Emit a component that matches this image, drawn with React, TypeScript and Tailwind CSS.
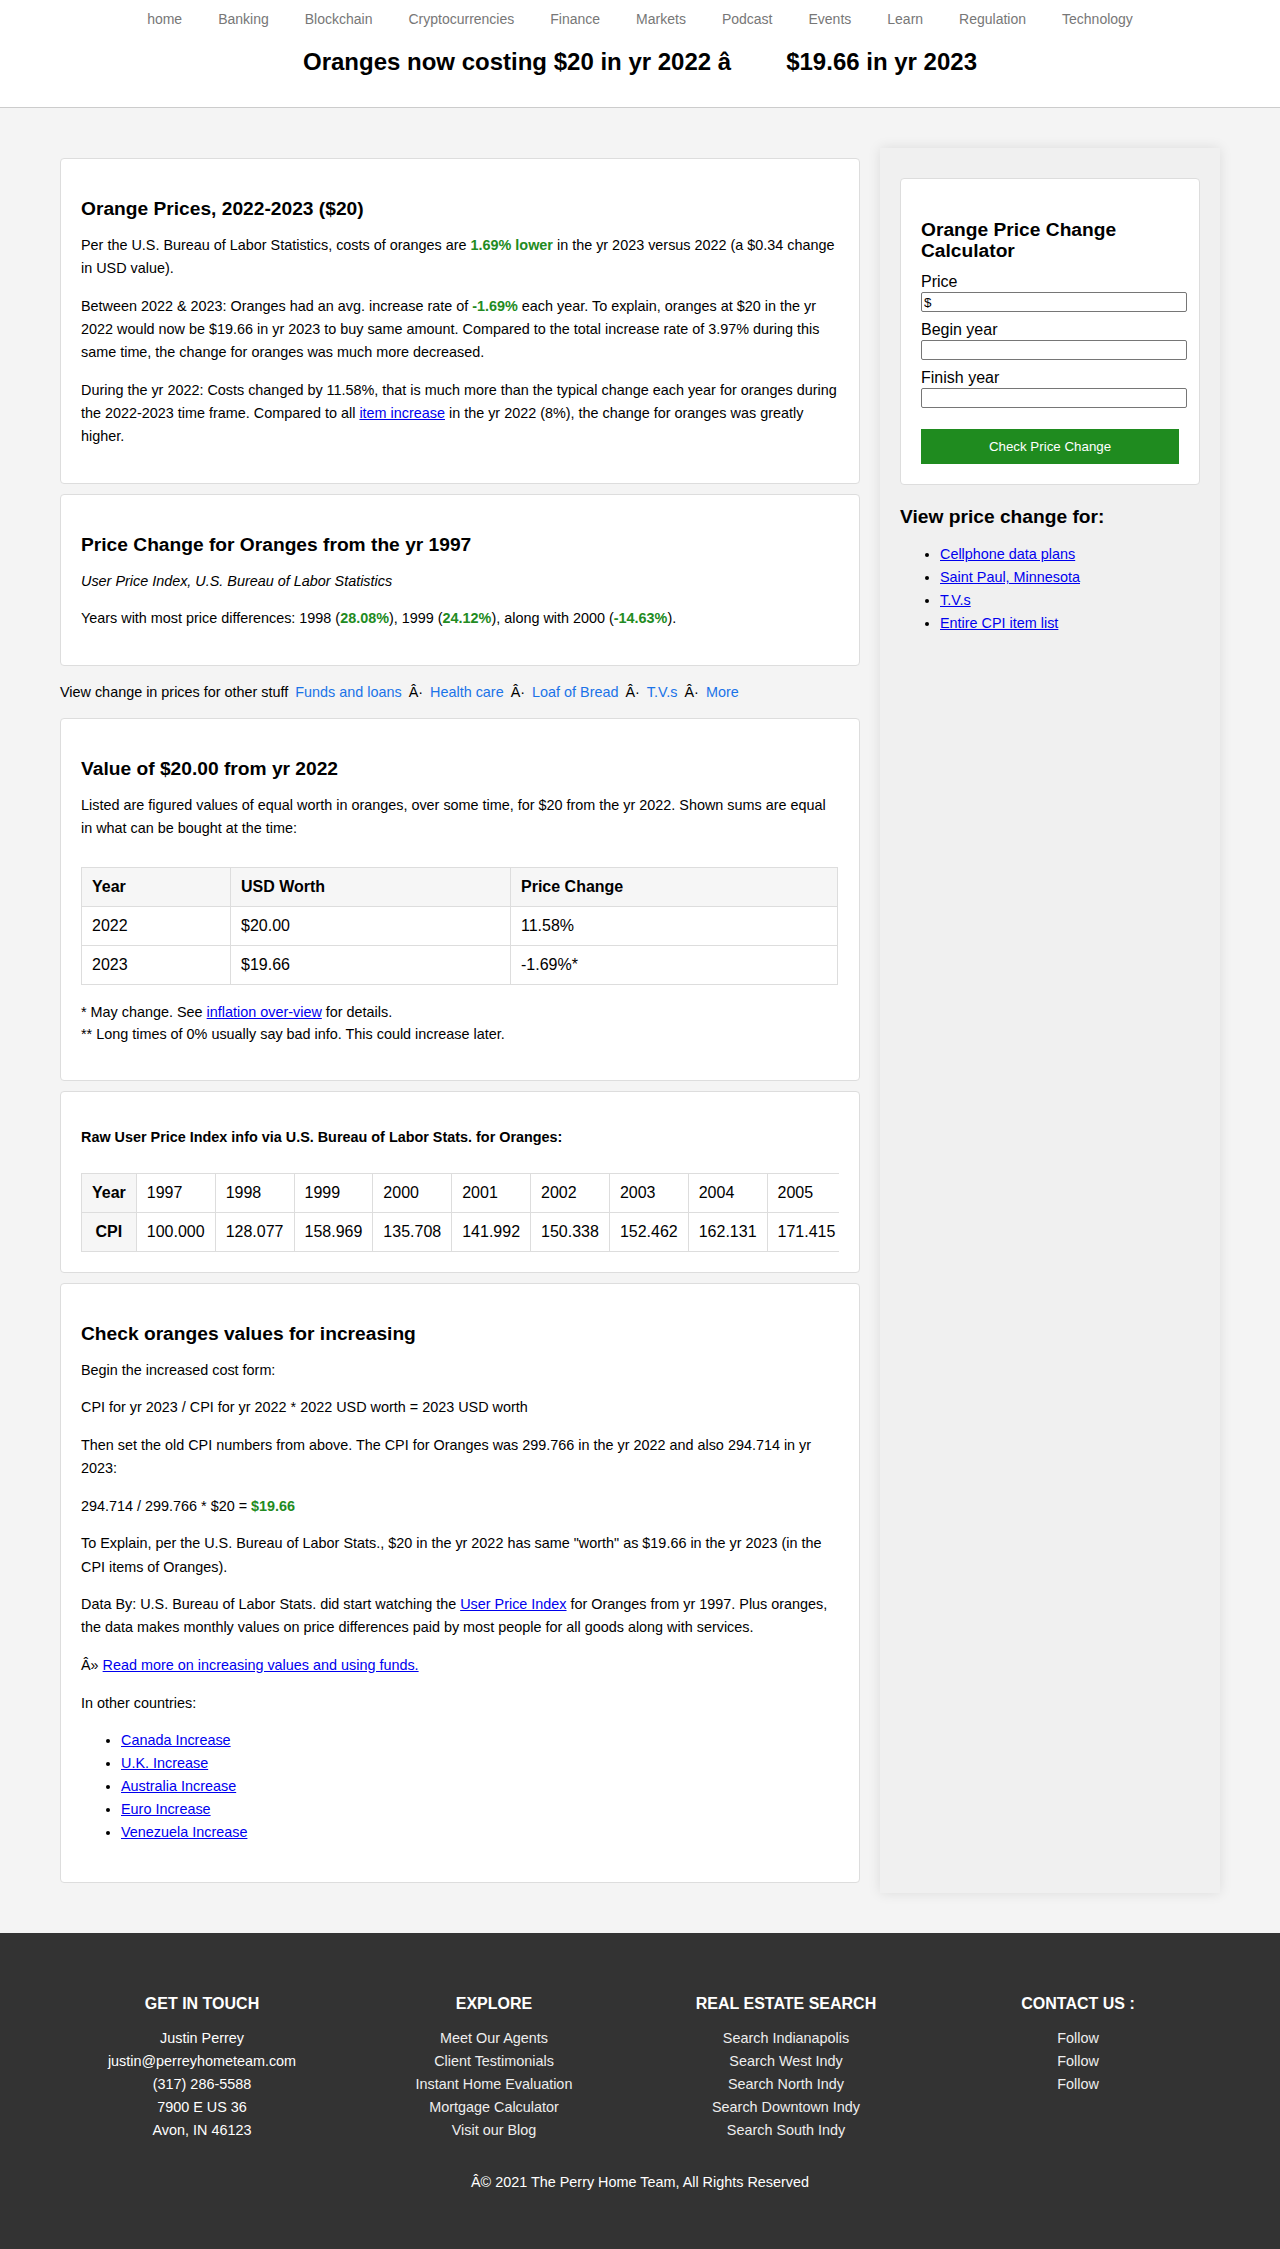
import React from 'react';

const nav = ['home', 'Banking', 'Blockchain', 'Cryptocurrencies', 'Finance', 'Markets', 'Podcast', 'Events', 'Learn', 'Regulation', 'Technology'];

const cpi: [string, string][] = [
  ['1997', '100.000'], ['1998', '128.077'], ['1999', '158.969'], ['2000', '135.708'], ['2001', '141.992'],
  ['2002', '150.338'], ['2003', '152.462'], ['2004', '162.131'], ['2005', '171.415'], ['2006', '180.220'],
  ['2007', '199.845'], ['2008', '213.553'], ['2009', '205.198'], ['2010', '209.017'], ['2011', '221.406'],
  ['2012', '229.914'], ['2013', '236.505'], ['2014', '241.080'], ['2015', '247.731'], ['2016', '244.308'],
  ['2017', '251.672'], ['2018', '259.203'], ['2019', '262.486'], ['2020', '270.334'], ['2021', '268.677'],
  ['2022', '299.766'], ['2023', '294.714'],
];

function Card({ children, className = '' }: { children: React.ReactNode; className?: string }) {
  return (
    <div className={`mb-[10px] rounded-[4px] border border-[#dddddd] bg-white px-[20px] pt-[20px] ${className}`}>
      {children}
    </div>
  );
}

function H2({ children }: { children: React.ReactNode }) {
  return <h2 className="mt-[19px] mb-[14px] text-[19.2px] font-bold leading-[22px]">{children}</h2>;
}

function P({ children, className = '' }: { children: React.ReactNode; className?: string }) {
  return <p className={`mb-[14.4px] leading-[23.2px] ${className}`}>{children}</p>;
}

const G = ({ children }: { children: React.ReactNode }) => <b className="text-[#228b22]">{children}</b>;
const A = ({ children }: { children: React.ReactNode }) => (
  <a href="#" className="text-[#0000ee] underline">
    {children}
  </a>
);

export default function App() {
  return (
    <div className="min-h-screen bg-[#f4f4f4] font-['Liberation_Sans',Arial,sans-serif] text-[14.4px] text-black">
      <header className="border-b border-[#cccccc] bg-white pt-[10px] pb-[31px] text-center">
        <nav className="flex justify-center gap-[36px] text-[14px] leading-[18px] text-[#777777]">
          {nav.map((n) => (
            <a key={n} href="#">
              {n}
            </a>
          ))}
        </nav>
        <h1 className="mt-[20px] text-[24px] font-bold leading-[28px]">
          Oranges now costing $20 in yr 2022 â<span className="inline-block w-[55px]" />$19.66 in yr 2023
        </h1>
      </header>

      <main className="pt-[40px] pb-[40px]">
        <div className="mx-auto flex w-[1160px] gap-[20px]">
          <div className="w-[800px] pt-[10px]">
            <Card className="pb-[20px]">
              <H2>Orange Prices, 2022-2023 ($20)</H2>
              <P>
                Per the U.S. Bureau of Labor Statistics, costs of oranges are <G>1.69% lower</G> in the yr 2023 versus 2022 (a $0.34
                change in USD value).
              </P>
              <P>
                Between 2022 &amp; 2023: Oranges had an avg. increase rate of <G>-1.69%</G> each year. To explain, oranges at $20 in
                the yr 2022 would now be $19.66 in yr 2023 to buy same amount. Compared to the total increase rate of 3.97% during this
                same time, the change for oranges was much more decreased.
              </P>
              <P>
                During the yr 2022: Costs changed by 11.58%, that is much more than the typical change each year for oranges during the
                2022-2023 time frame. Compared to all <A>item increase</A> in the yr 2022 (8%), the change for oranges was greatly
                higher.
              </P>
            </Card>

            <Card className="pb-[20px]">
              <H2>Price Change for Oranges from the yr 1997</H2>
              <P className="italic">User Price Index, U.S. Bureau of Labor Statistics</P>
              <P>
                Years with most price differences: 1998 (<G>28.08%</G>), 1999 (<G>24.12%</G>), along with 2000 (<G>-14.63%</G>).
              </P>
            </Card>

            <div className="pt-[4px] pb-[14px] leading-[24px]">
              View change in prices for other stuff <a href="#" className="mx-[3px] text-[#1a73e8]">Funds and loans</a> Â·{' '}
              <a href="#" className="mx-[3px] text-[#1a73e8]">Health care</a> Â·{' '}
              <a href="#" className="mx-[3px] text-[#1a73e8]">Loaf of Bread</a> Â·{' '}
              <a href="#" className="mx-[3px] text-[#1a73e8]">T.V.s</a> Â·{' '}
              <a href="#" className="mx-[3px] text-[#1a73e8]">More</a>
            </div>

            <Card className="pb-[20px]">
              <H2>Value of $20.00 from yr 2022</H2>
              <P>
                Listed are figured values of equal worth in oranges, over some time, for $20 from the yr 2022. Shown sums are equal in
                what can be bought at the time:
              </P>
              <table className="mt-[27px] w-[757px] border-collapse text-[16px] leading-[18px]">
                <thead>
                  <tr className="bg-[#f6f6f6]">
                    <th className="w-[149px] border border-[#dddddd] px-[10px] py-[10px] text-left font-bold">Year</th>
                    <th className="w-[280px] border border-[#dddddd] px-[10px] py-[10px] text-left font-bold">USD Worth</th>
                    <th className="border border-[#dddddd] px-[10px] py-[10px] text-left font-bold">Price Change</th>
                  </tr>
                </thead>
                <tbody>
                  <tr>
                    <td className="border border-[#dddddd] px-[10px] py-[10px]">2022</td>
                    <td className="border border-[#dddddd] px-[10px] py-[10px]">$20.00</td>
                    <td className="border border-[#dddddd] px-[10px] py-[10px]">11.58%</td>
                  </tr>
                  <tr>
                    <td className="border border-[#dddddd] px-[10px] py-[10px]">2023</td>
                    <td className="border border-[#dddddd] px-[10px] py-[10px]">$19.66</td>
                    <td className="border border-[#dddddd] px-[10px] py-[10px]">-1.69%*</td>
                  </tr>
                </tbody>
              </table>
              <p className="mt-[16px] mb-[14.4px] leading-[22px]">
                * May change. See <A>inflation over-view</A> for details.
                <br />
                ** Long times of 0% usually say bad info. This could increase later.
              </p>
            </Card>

            <Card className="pb-[20px]">
              <h3 className="mt-[14px] mb-[25px] text-[14.4px] font-bold leading-[22px]">
                Raw User Price Index info via U.S. Bureau of Labor Stats. for Oranges:
              </h3>
              <div className="overflow-hidden">
                <table className="border-collapse text-[16px] leading-[18px]">
                  <tbody>
                    <tr>
                      <th className="border border-[#dddddd] bg-[#f6f6f6] px-[10px] py-[10px] font-bold">Year</th>
                      {cpi.map(([y]) => (
                        <td key={y} className="border border-[#dddddd] px-[10px] py-[10px] text-left">
                          {y}
                        </td>
                      ))}
                    </tr>
                    <tr>
                      <th className="border border-[#dddddd] bg-[#f6f6f6] px-[10px] py-[10px] font-bold">CPI</th>
                      {cpi.map(([y, v]) => (
                        <td key={y} className="border border-[#dddddd] px-[10px] py-[10px] text-left">
                          {v}
                        </td>
                      ))}
                    </tr>
                  </tbody>
                </table>
              </div>
            </Card>

            <Card className="pb-[23px]">
              <H2>Check oranges values for increasing</H2>
              <P>Begin the increased cost form:</P>
              <P>CPI for yr 2023 / CPI for yr 2022 * 2022 USD worth = 2023 USD worth</P>
              <P>
                Then set the old CPI numbers from above. The CPI for Oranges was 299.766 in the yr 2022 and also 294.714 in yr 2023:
              </P>
              <P>
                294.714 / 299.766 * $20 = <G>$19.66</G>
              </P>
              <P>
                To Explain, per the U.S. Bureau of Labor Stats., $20 in the yr 2022 has same "worth" as $19.66 in the yr 2023 (in the
                CPI items of Oranges).
              </P>
              <P>
                Data By: U.S. Bureau of Labor Stats. did start watching the <A>User Price Index</A> for Oranges from yr 1997. Plus
                oranges, the data makes monthly values on price differences paid by most people for all goods along with services.
              </P>
              <P>
                Â» <A>Read more on increasing values and using funds.</A>
              </P>
              <P>In other countries:</P>
              <ul className="mb-[14.4px] list-disc pl-[40px] leading-[23px]">
                <li><A>Canada Increase</A></li>
                <li><A>U.K. Increase</A></li>
                <li><A>Australia Increase</A></li>
                <li><A>Euro Increase</A></li>
                <li><A>Venezuela Increase</A></li>
              </ul>
            </Card>
          </div>

          <aside className="w-[340px] bg-[#f0f0f0] px-[20px] pt-[30px] shadow-[0_0_12px_rgba(0,0,0,0.1)]">
            <div className="rounded-[4px] border border-[#dddddd] bg-white px-[20px] pt-[20px] pb-[20px]">
              <h3 className="mt-[20px] mb-[12px] text-[19.2px] font-bold leading-[21px]">Orange Price Change Calculator</h3>
              <label className="block text-[16px] leading-[18px]">Price</label>
              <input
                defaultValue="$"
                className="mt-[1px] block h-[20px] w-[266px] rounded-[2px] border border-[#767676] px-[2px] text-[13.33px] leading-[16px]"
              />
              <label className="mt-[9px] block text-[16px] leading-[18px]">Begin year</label>
              <input className="mt-[1px] block h-[20px] w-[266px] rounded-[2px] border border-[#767676] px-[2px] text-[13.33px]" />
              <label className="mt-[9px] block text-[16px] leading-[18px]">Finish year</label>
              <input className="mt-[1px] block h-[20px] w-[266px] rounded-[2px] border border-[#767676] px-[2px] text-[13.33px]" />
              <button className="mt-[21px] block h-[35px] w-full bg-[#1f8b1f] text-[13.33px] text-white">Check Price Change</button>
            </div>
            <h3 className="mt-[21px] text-[19.2px] font-bold leading-[22px]">View price change for:</h3>
            <ul className="mt-[15px] list-disc pl-[40px] leading-[23px]">
              <li><A>Cellphone data plans</A></li>
              <li><A>Saint Paul, Minnesota</A></li>
              <li><A>T.V.s</A></li>
              <li><A>Entire CPI item list</A></li>
            </ul>
          </aside>
        </div>
      </main>

      <footer className="bg-[#333333] pt-[62px] pb-[56px] text-center text-white">
        <div className="mx-auto grid w-[1168px] grid-cols-4">
          <div>
            <h4 className="mb-[14.5px] text-[16px] font-bold leading-[18px]">GET IN TOUCH</h4>
            <div className="leading-[23px]">
              <p>Justin Perrey</p>
              <p>justin@perreyhometeam.com</p>
              <p>(317) 286-5588</p>
              <p>7900 E US 36</p>
              <p>Avon, IN 46123</p>
            </div>
          </div>
          <div>
            <h4 className="mb-[14.5px] text-[16px] font-bold leading-[18px]">EXPLORE</h4>
            <div className="leading-[23px] text-[#eeeeee]">
              <p>Meet Our Agents</p>
              <p>Client Testimonials</p>
              <p>Instant Home Evaluation</p>
              <p>Mortgage Calculator</p>
              <p>Visit our Blog</p>
            </div>
          </div>
          <div>
            <h4 className="mb-[14.5px] text-[16px] font-bold leading-[18px]">REAL ESTATE SEARCH</h4>
            <div className="leading-[23px] text-[#eeeeee]">
              <p>Search Indianapolis</p>
              <p>Search West Indy</p>
              <p>Search North Indy</p>
              <p>Search Downtown Indy</p>
              <p>Search South Indy</p>
            </div>
          </div>
          <div>
            <h4 className="mb-[14.5px] text-[16px] font-bold leading-[18px]">CONTACT US :</h4>
            <div className="leading-[23px] text-[#eeeeee]">
              <p>Follow</p>
              <p>Follow</p>
              <p>Follow</p>
            </div>
          </div>
        </div>
        <p className="mt-[29px] leading-[23px]">Â© 2021 The Perry Home Team, All Rights Reserved</p>
      </footer>
    </div>
  );
}
